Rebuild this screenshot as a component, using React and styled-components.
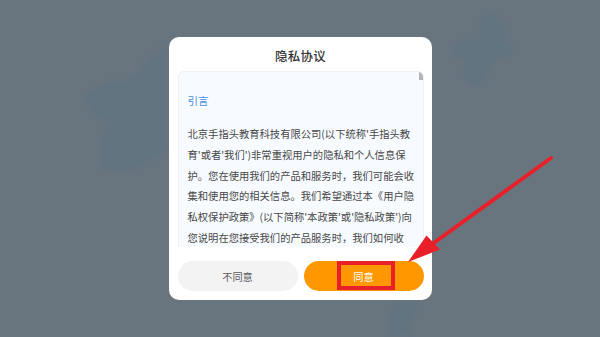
import React from "react";
import styled, { createGlobalStyle } from "styled-components";

const Global = createGlobalStyle`
  html, body { margin: 0; padding: 0; }
  body { font-family: "Noto Sans CJK SC", "Noto Sans", sans-serif; }
  #root { width: 600px; height: 337px; }
`;

const Page = styled.div`
  position: relative;
  width: 600px;
  height: 337px;
  overflow: hidden;
  background: #69757e;
  display: flex;
  align-items: center;
  justify-content: center;
`;

const Decor = styled.svg`
  position: absolute;
  inset: 0;
  pointer-events: none;
`;

const Dialog = styled.div`
  position: relative;
  width: 263px;
  height: 263px;
  box-sizing: border-box;
  background: #ffffff;
  border-radius: 10px;
  padding: 0 8px 9px 9px;
  display: flex;
  flex-direction: column;
`;

const Title = styled.div`
  height: 34px;
  display: flex;
  align-items: center;
  justify-content: center;
  font-size: 12.5px;
  font-weight: 500;
  color: #333333;
  letter-spacing: 0.2px;
  padding-top: 2px;
  box-sizing: border-box;
`;

const Content = styled.div`
  position: relative;
  height: 176px;
  box-sizing: border-box;
  background: #f7fbff;
  border: 1px solid #edf1f5;
  border-bottom: none;
  border-radius: 6px 6px 0 0;
  padding: 19px 10px 0 9px;
  overflow: hidden;
`;

const ScrollThumb = styled.div`
  position: absolute;
  top: 0;
  right: 0;
  width: 4px;
  height: 8px;
  background: #b3b5b8;
`;

const Heading = styled.div`
  font-size: 10.5px;
  line-height: 20px;
  color: #4a90e2;
  margin-bottom: 13px;
`;

const Line = styled.div`
  font-size: 10.3px;
  line-height: 20.8px;
  color: #474747;
  white-space: nowrap;
`;

const Buttons = styled.div`
  margin-top: 14px;
  display: flex;
  gap: 6px;
`;

const Button = styled.div`
  position: relative;
  flex: 1;
  height: 30px;
  border-radius: 15px;
  display: flex;
  align-items: center;
  justify-content: center;
  font-size: 10.2px;
  background: ${(p) => (p.$primary ? "#ff9800" : "#f3f3f3")};
  color: ${(p) => (p.$primary ? "#ffffff" : "#5a5a5a")};
`;

const Highlight = styled.span`
  position: absolute;
  left: 33px;
  top: 0;
  width: 58px;
  height: 29px;
  box-sizing: border-box;
  border: 4px solid #e8202a;
`;

const Label = styled.span`
  position: relative;
`;

const Annotation = styled.svg`
  position: absolute;
  inset: 0;
  pointer-events: none;
`;

const lines = [
  "北京手指头教育科技有限公司(以下统称'手指头教",
  "育'或者'我们')非常重视用户的隐私和个人信息保",
  "护。您在使用我们的产品和服务时，我们可能会收",
  "集和使用您的相关信息。我们希望通过本《用户隐",
  "私权保护政策》(以下简称'本政策'或'隐私政策')向",
  "您说明在您接受我们的产品服务时，我们如何收",
];

export default function App() {
  return (
    <>
      <Global />
      <Page>
        <Decor width="600" height="337" viewBox="0 0 600 337">
          <defs>
            <filter id="soft" x="-20%" y="-20%" width="140%" height="140%">
              <feGaussianBlur stdDeviation="2.5" />
            </filter>
          </defs>
          <g fill="#5b7385" opacity="0.45" filter="url(#soft)">
            <path d="M490 14 C502 14 508 28 504 40 C520 44 512 60 498 58 C490 72 482 90 470 86 C460 82 462 66 466 60 C452 60 446 50 452 44 C460 38 470 38 478 40 C478 26 482 14 490 14 Z" />
            <path d="M168 45 C150 50 140 70 132 80 C115 78 90 84 86 98 C84 112 100 120 110 124 C98 140 96 160 108 172 C130 176 150 160 168 150 Z" />
            <path d="M392 337 C384 326 386 312 396 304 C404 300 412 302 420 304 C414 314 410 326 412 337 Z" />
          </g>
        </Decor>
        <Dialog>
          <Title>隐私协议</Title>
          <Content>
            <ScrollThumb />
            <Heading>引言</Heading>
            {lines.map((t, i) => (
              <Line key={i}>{t}</Line>
            ))}
          </Content>
          <Buttons>
            <Button>不同意</Button>
            <Button $primary>
              <Highlight />
              <Label>同意</Label>
            </Button>
          </Buttons>
        </Dialog>
        <Annotation width="600" height="337" viewBox="0 0 600 337">
          <line x1="551" y1="158" x2="424" y2="250" stroke="#e8202a" strokeWidth="4" strokeLinecap="round" />
          <polygon points="408,262 426.5,235.5 440,249.5" fill="#e8202a" />
        </Annotation>
      </Page>
    </>
  );
}
